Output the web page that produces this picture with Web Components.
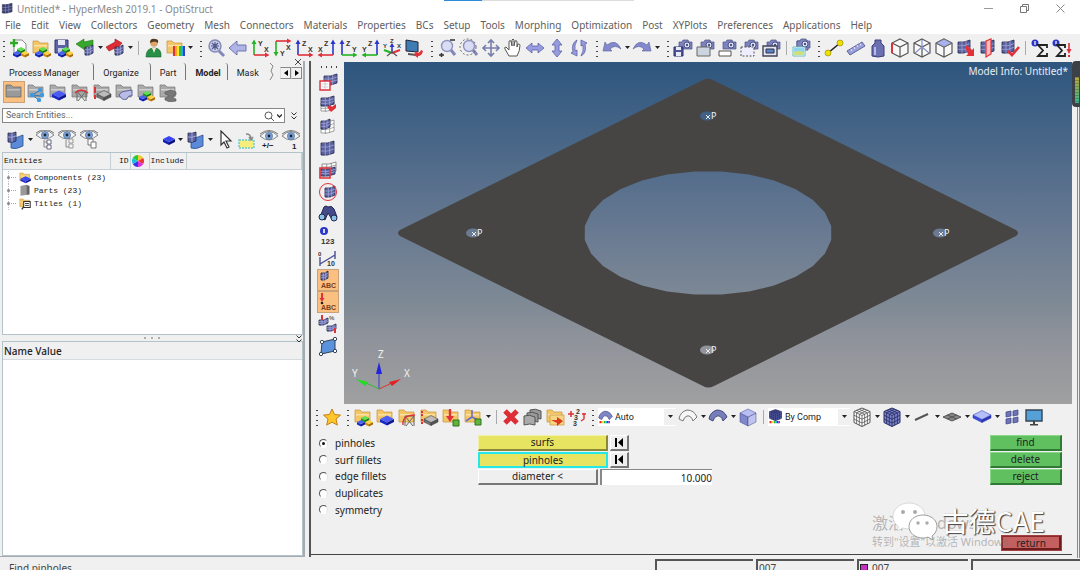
<!DOCTYPE html>
<html lang="en">
<head>
<meta charset="utf-8">
<title>Untitled* - HyperMesh 2019.1 - OptiStruct</title>
<style>
  html, body { margin: 0; height: 100%; overflow: hidden; }
  body { font: 10px/14px "Noto Sans", "Open Sans", sans-serif; color: #222; background: #f0f0f0; }
  hm-app { height: 100%; }
</style>
</head>
<body>
<hm-app></hm-app>

<script>
/* ---------- icon drawing helpers (20 x 20 canvas) ---------- */
const P = (d, fill = 'none', stroke = 'none', w = 1, extra = '') =>
  `<path d="${d}" fill="${fill}" stroke="${stroke}" stroke-width="${w}" ${extra}/>`;
const T = (x, y, s, t, fill = '#333', extra = '') =>
  `<text x="${x}" y="${y}" font-size="${s}" font-weight="700" font-family="Liberation Sans, sans-serif" fill="${fill}" ${extra}>${t}</text>`;
const box = (x, y, w, h, d, top, left, right, line = 'none') =>
  P(`M${x - w} ${y}v${d}l${w} ${h}v${-d}z`, left, line, .5) +
  P(`M${x + w} ${y}v${d}l${-w} ${h}v${-d}z`, right, line, .5) +
  P(`M${x} ${y - h}l${w} ${h}l${-w} ${h}l${-w} ${-h}z`, top, line, .5);
const GREEN = ['#5fe04f', '#1c9a18', '#12750f'], BLUE = ['#4a62f0', '#1a2bc0', '#101c90'],
      YEL = ['#ffd04a', '#d08a10', '#a86c08'], GREY = ['#bbb', '#777', '#555'];
const blocks = (x, y) => box(x, y - 3, 4, 2, 3, ...GREEN) + box(x - 4, y + 1, 4, 2, 2.5, ...BLUE) + box(x + 4, y + 1, 4, 2, 2.5, ...YEL);
const folder = (c = '#f3c766', e = '#c8923a', hi = '#fbe2a4') =>
  P('M2 3h5l2 2h8v10H2z', c, e, .7) + P('M3 7h13v1.500H3z', hi);
const gfolder = folder('#a9a9a9', '#777', '#cfcfcf');
const mesh = (x, y, w = 12, h = 11, c = '#5b62a0', e = '#23264d') => {
  const a = w / 3, b = h / 3;
  return P(`M${x} ${y}q${w / 2} 1 ${w} -2v${h}q${-w / 2} 3 ${-w} 2z`, c, e, .8) +
    P(`M${x} ${y + b}q${w / 2} 1 ${w} -2M${x} ${y + 2 * b}q${w / 2} 1 ${w} -2M${x + a} ${y}v${h + 1}M${x + 2 * a} ${y - 1}v${h + 1}`, 'none', e === '#23264d' ? '#a9aede' : e, .7);
};
const surf = (x, y) => P(`M${x} ${y + 1}q5 2 12 -2v11q-7 4 -12 2z`, '#5b8bd8', '#284a8c', .8) +
  P(`M${x - 3} ${y - 3}q4 1 8 -1v9q-4 2 -8 1z`, '#5b62a0', '#23264d', .8) + P(`M${x - 3} ${y + 1}q4 1 8 -1M${x + 1} ${y - 3}v9`, 'none', '#b5b9e6', .8);
const cam = (x, y) => P(`M${x} ${y + 2}h3l1 -2h5l1 2h3v7h-13z`, '#7d83bc', '#4b5086', .7) +
  `<circle cx="${x + 8}" cy="${y + 5}" r="3" fill="#e4e6f6" stroke="#4b5086"/><circle cx="${x + 8}" cy="${y + 5}" r="1.200" fill="#4b5086"/>`;
const eye = (y = 7) => P(`M1 ${y}q9 -9 18 0q-9 8 -18 0z`, '#f4f4f4', '#777', .9) +
  P(`M1 ${y - 2}q9 -7 18 0`, 'none', '#777', 1) + `<circle cx="10" cy="${y}" r="3.600" fill="#7ba3d8" stroke="#44678f" stroke-width=".6"/><circle cx="10" cy="${y}" r="1.400" fill="#223"/>`;
const lens = '<circle cx="10" cy="8" r="5.500" fill="#d9dcf3" stroke="#8f94bf" stroke-width="1.400"/>' + P('M14 12l4 5', 'none', '#8187b8', 3);
const cubeWire = P('M10 1l8 4v10l-8 4l-8 -4V5z', '#f8f8f8', '#555', 1.2) + P('M2 5l8 4l8 -4M10 9v10', 'none', '#555', 1.2);
const rubik = (f, l) => P('M10 1l8 3.500v11l-8 4l-8 -4v-11z', f, l, 1) +
  P('M2 4.500l8 4l8 -4M10 8.500v11M4.700 3.300l8 4v11M7.400 2.200l8 3.800v11M15.300 3.300l-8 4v11M12.600 2.200l-8 3.600v11M2 8.200l8 4l8 -4M2 12l8 4l8 -4', 'none', l, .8);
const ax = (sx, sy, cv, ch, tv, th, down) => {
  const x0 = sx > 0 ? 4 : 17, x1 = sx > 0 ? 18 : 3, y0 = down ? 3 : 17, y1 = down ? 17 : 3, k = down ? -3 : 3, m = sx > 0 ? -3 : 3;
  return P(`M${x0} ${y0}V${y1}`, 'none', cv, 1.6) + P(`M${x0 - 2.500} ${y1 + k}L${x0} ${y1 - k / 2}L${x0 + 2.500} ${y1 + k}z`, cv) +
    P(`M${x0} ${y0}H${x1}`, 'none', ch, 1.6) + P(`M${x1 + m} ${y0 - 2.500}L${x1 - m / 2} ${y0}L${x1 + m} ${y0 + 2.500}z`, ch) +
    T(sx > 0 ? 8 : 8, down ? 18 : 8, 7, tv) + T(sx > 0 ? 14 : 2, down ? 12 : 14, 7, th);
};
const R = '#e0303a', G = '#22b422', B = '#2b36c8';
const sheet = (f, l) => P('M1 12Q2 5 9 3q7 0 10 7l-4 4Q13 8 9 9q-3 1 -4 5z', f, l, 1);
const rbw = ['#e22', '#f90', '#ee2', '#2b3', '#2ad', '#33d', '#a2c'].map((c, i) => `<rect x="${2 + i * 2}" y="16" width="2" height="3" fill="${c}"/>`).join('');

const ICONS = {
  new: P('M5 2h8l4 4v11H5z', '#fff', '#888') + P('M5 1v8M1 5h8', 'none', '#2faa25', 2.4) + blocks(12, 14),
  open: folder() + blocks(12, 14),
  save: P('M2 2h13v13H2z', '#5d63a5', '#33376c') + P('M5 2h7v5H5z', '#e5e7f5') + P('M5 10h7v5H5z', '#c9cce6') + blocks(13, 14),
  import: P('M1 6l8 -5v3l9 -2v5l-8 2v3z', '#37a82c', '#1e7618', .6) + mesh(10, 9, 8, 8),
  export: P('M17 5l-7 -4v3l-9 5l3 4l6 -3v3z', '#df2c34', '#96151b', .6) + mesh(10, 9, 8, 8),
  user: '<circle cx="11" cy="5" r="3.800" fill="#d9a56a"/>' + P('M7 5q0 -5 5 -4q4 0 3 4q-3 -3 -8 0z', '#52371c') + P('M3 19q0 -9 8 -9t7 9z', '#279046', '#176430', .6) + P('M9 10l2 5l2 -5z', '#f4e6cf'),
  palette: folder() + [R, '#f7a21c', '#f2e92c', '#2fbb3d', '#2aa7dd', '#3340cc'].map((c, i) => `<rect x="${8 + i * 2}" y="8" width="2" height="10" fill="${c}"/>`).join(''),
  fit: '<circle cx="9" cy="8" r="6" fill="#c9cde8" stroke="#8389b4" stroke-width="1.400"/>' + P('M9 4v8M5 8h8M6 5l6 6M12 5l-6 6', 'none', '#555b8c', 1.2) + P('M13 13l5 5', 'none', '#8187b8', 3),
  back: P('M1 10l8 -7v4h9v6H9v4z', '#aeb4e6', '#666ca8', .9),
  axYX: ax(1, 1, G, R, 'Y', 'X'), axYdX: ax(1, 1, G, R, 'Y', 'X', true), axZX: ax(1, 1, B, R, 'Z', 'X'),
  axXZ: ax(-1, 1, B, R, 'Z', 'X'), axZY: ax(1, 1, B, G, 'Z', 'Y'), axYZ: ax(-1, 1, B, G, 'Z', 'Y'),
  triad: P('M10 14V6', 'none', B, 1.6) + P('M7.500 9L10 5l2.500 4z', B) + P('M10 15l-8 -3', 'none', G, 2) + P('M10 15l8 -3', 'none', R, 2) + P('M10 14l-5 4M10 14l5 4', 'none', '#555', 1.2) + T(1, 10, 6, 'Y') + T(15, 10, 6, 'X') + T(8, 5, 6, 'Z'),
  shotred: P('M2 2l12 2v10l-12 -1z', '#3f7cb4', '#223', 1) + P('M4 15l8 1v2l-8 -1z', '#555') + P('M10 17l2 -4l1 2q3 0 4 -3l2 1q-1 5 -5 5l0 2z', R),
  zoomio: lens + P('M13 2h5M2 17h5M4.500 15v4', 'none', '#333', 1.6),
  zoomc: lens + '<circle cx="9" cy="9" r="8" fill="none" stroke="#666" stroke-dasharray="2 2"/>',
  pan: P('M10 2v16M2 10h16M7 5l3 -3l3 3M7 15l3 3l3 -3M5 7l-3 3l3 3M15 7l3 3l-3 3', 'none', '#777dad', 1.6),
  hand: P('M6 18L2 11q-1 -2 1 -2l3 3V4q0 -2 2 -1l1 5V2q1 -2 2 0v6l1 -5q2 -1 2 1v5l1 -3q2 0 2 1q0 6 -3 11z', '#fff', '#555', 1),
  lr: P('M1 10l6 -5v3h6V5l6 5l-6 5v-3H7v3z', '#969ce0', '#5d62a4', .8),
  ud: P('M10 1l5 6h-3v6h3l-5 6l-5 -6h3V7H5z', '#969ce0', '#5d62a4', .8),
  rot: P('M8 2Q2 5 4 14l-2 1l6 3v-6l-2 1Q5 7 8 2zM12 18q6 -3 4 -12l2 -1l-6 -3v6l2 -1q1 6 -2 11z', '#969ce0', '#5d62a4', .8),
  undo: P('M1 13l2 -9l2 3q9 -7 14 4q-6 -5 -11 0l2 2z', '#8289cc', '#5a5f9c', .6),
  redo: P('M19 13l-2 -9l-2 3q-9 -7 -14 4q6 -5 11 0l-2 2z', '#8289cc', '#5a5f9c', .6),
  camSave: cam(6, 2) + P('M1 9h9v9H1z', '#4d5498', '#2c306b') + P('M3 9h5v3H3zM3 14h5v4H3z', '#e8e9f6'),
  camWin: cam(6, 2) + P('M2 9h13v9H2z', '#ccd5df', '#666'), camBar: cam(6, 2) + P('M2 13h12v5H2z', '#fff', '#555'),
  camDash: cam(6, 2) + P('M2 9h13v9H2z', '#eef', '#555', 1, 'stroke-dasharray="2 1.500"'),
  camBox: cam(6, 2) + P('M2 8h14v10H2z', '#dfe3f2', '#445', 1.4) + P('M5 11h8v4H5z', '#5b83c8', '#334'),
  camPics: P('M6 3h11v9H6z', '#a5abda', '#50558e') + cam(6, 1) + P('M2 9h12v9H2z', '#fff', '#6bbcc2') + P('M3 10h10v4H3z', '#8fd4ee') + P('M3 17v-3q5 -2 10 0v3z', '#cfe07a'),
  nodes: P('M4 15l12 -10', 'none', '#222', 1.6) + '<circle cx="4" cy="15" r="3" fill="#efe000" stroke="#8b8200" stroke-width=".6"/><circle cx="16" cy="5" r="3" fill="#efe000" stroke="#8b8200" stroke-width=".6"/>',
  ruler: P('M1 13L16 4l3 4L4 17z', '#9aa1da', '#5c629c') + P('M5 11l1 2M8 9l1 2M11 7l1 2M14 5.500l1 2', 'none', '#e9eaff', 1),
  weight: P('M7 2h6v3l3 3v10q-6 2 -12 0V8l3 -3z', '#6a70b0', '#3a3f78') + P('M7 9v8', 'none', '#b6baf0', 2),
  cubeRed: cubeWire + P('M2 5v10', 'none', R, 2), cubeStar: cubeWire + P('M10 9l-7 6M10 9l7 6M10 9V2', 'none', '#8891c8', 1.2),
  cubeTop: cubeWire + P('M10 1l8 4l-8 4l-8 -4z', '#a9b1ee', '#666', .8),
  meshArrow: mesh(2, 4, 12, 11) + P('M9 9l2 -2l5 5l2 -2v8h-8l2 -2z', R),
  meshPlane: mesh(3, 4, 13, 11) + P('M8 3l5 -2v15l-5 3z', '#fbb', R, 1.2), meshCheck: mesh(2, 4, 12, 11) + P('M8 13l4 4l7 -8', 'none', R, 2.6),
  sigma: `<circle cx="5" cy="5" r="3.500" fill="${B}"/>` + P('M5 3v4', 'none', '#fff', 1.2) + P('M17 10V7H8l5 5.500L8 18h9v-3', 'none', '#222', 1.8),
  sigmaX: `<circle cx="4" cy="5" r="3.500" fill="${B}"/>` + P('M4 3v4', 'none', '#fff', 1.2) + P('M13 10V7H5l5 5.500L5 18h8v-3', 'none', '#222', 1.8) + P('M17 5v8', 'none', R, 1.6) + P('M14.500 11h5l-2.500 5z', R) + P('M16 17h2v2h-2z', R),
  /* model browser */
  fold: folder('#9a9a9a', '#666', '#bdbdbd'),
  foldShare: gfolder + P('M6 13l7 -4M6 13l9 1M6 13l7 5', 'none', '#2f77b8', 1) + [[6, 13], [14, 8], [16, 13], [13, 18]].map(p => `<circle cx="${p[0]}" cy="${p[1]}" r="2.200" fill="#3f9be0"/>`).join(''),
  foldBlue: gfolder + box(11, 12, 7, 3.5, 3, '#4a5cf5', '#1a27c8', '#0f1890'), foldTruss: gfolder + P('M7 19V9h9v10M7 9l8 10M16 9l-8 10', 'none', '#666', 1) + P('M5 11q6 -6 13 0', 'none', R, 1.4),
  foldGrey: gfolder + box(12, 12, 7, 3.5, 3, ...GREY, '#333') + P('M3 5v6M3 13v4', 'none', R, 2), foldTube: gfolder + P('M5 13q2 -4 7 -4l6 -1v6q-4 -1 -5 3q-5 2 -8 -4z', '#b8bce6', '#5c6296'),
  foldBlocks: gfolder + blocks(11, 14), foldI: gfolder + P('M7 10l6 -2l5 2v3l-3 1v2l3 1v2l-6 1l-5 -2v-2l3 -1v-2l-3 -1z', '#777', '#555', .6),
  surf: surf(6, 6), eyeTree: eye(5) + P('M9 10v7h3M9 12h3', 'none', '#888') + P('M12 10h4v4h-4zM12 15h4v4h-4z', '#fff', '#668', 1), eyeTree2: eye(5) + P('M9 10v7h3', 'none', '#888') + P('M12 9h4v4h-4zM12 14h4v4h-4z', '#f4f4f4', '#999'),
  eyePages: eye(5) + P('M9 9h5v6H9z', '#fff', '#777') + P('M12 12h5v6h-5z', '#fff', '#777'), blueBox: box(14, 9, 6, 3, 3, '#3647f0', '#1420b0', '#0c147c'),
  pick: P('M6 1v14l3 -3l3 6l2 -1l-3 -6h5z', '#fff', '#333', 1.2), bucket: P('M2 10h15v8H2z', '#f6ee7c', '#6ac8cc', 1.4, 'stroke-dasharray="2 1"') + P('M9 4q5 0 5 5M12 7l2 3l2 -3', 'none', '#888', 1.4),
  eyePM: eye(6) + T(3, 18, 8, '+/−', '#222'), eyeOne: eye(6) + T(11, 19, 8, '1', '#222'),
  /* display strip */
  mRed: mesh(6, 4, 13, 9) + P('M2 9h10v9H2z', '#fff', R, 1.4) + P('M4 12h6M4 15h6M7 10v7', 'none', '#bbb', .7),
  mMask: mesh(3, 9, 13, 8, '#fff', '#888') + mesh(3, 4, 13, 8) + P('M9 13l3 -2l2 2l4 -3v4l-5 4z', R), mHalf: mesh(3, 6, 13, 11, '#fff', '#888') + mesh(3, 5, 9, 8), mFull: mesh(3, 5, 13, 12),
  mRed2: mesh(4, 4, 14, 9, '#fff', '#777') + mesh(3, 9, 14, 7) + P('M2 8h10v10H2z', 'none', R, 1.6), mCircle: mesh(7, 6, 10, 9) + `<circle cx="10" cy="10" r="8.500" fill="none" stroke="${R}"/>`,
  binoc: P('M2 13L6 3q2 -2 4 0q4 -2 6 2l3 8l-4 4l-5 -8l-3 7z', '#444a8a', '#22264f') + '<circle cx="4" cy="13" r="3" fill="#8cc0e8" stroke="#22264f"/><circle cx="16" cy="14" r="3" fill="#8cc0e8" stroke="#22264f"/>',
  info: `<circle cx="6" cy="5" r="4" fill="${B}"/>` + P('M6 3v4', 'none', '#fff', 1.6) + T(3, 18, 8, '123', '#333'),
  scale: P('M2 18V9M2 16L17 7M17 11V3', 'none', '#4b4f8f', 1.4) + T(0, 8, 6, '0') + T(9, 18, 7, '10'),
  abc: mesh(3, 3, 7, 7) + T(3, 18, 7, 'ABC', '#774020'), abcRed: P('M4 1v7', 'none', R, 2) + P('M1.500 6h5l-2.500 4z', R) + '<circle cx="4" cy="11" r="1.300" fill="#222"/>' + T(3, 18, 7, 'ABC', '#774020'),
  loads: mesh(1, 6, 9, 5) + mesh(9, 12, 9, 5) + P('M4 1v5M17 14v5', 'none', R, 2) + T(11, 6, 6, '%', '#666'),
  quad: P('M4 6l13 -3v12l-14 3z', '#5b92dc', '#345') + [[4, 6], [17, 3], [17, 15], [3, 18]].map(p => `<circle cx="${p[0]}" cy="${p[1]}" r="1.700" fill="#fff" stroke="#345"/>`).join(''),
  /* collectors strip */
  star: P('M10 2l2.500 5.500l6 .6l-4.500 4l1.300 6l-5.300 -3l-5.300 3l1.300 -6l-4.500 -4l6 -.6z', '#ffc62a', '#c47d10'),
  cBlocks: folder() + blocks(12, 14), cBlue: folder() + box(12, 12, 7, 3.5, 3, '#4a5cf5', '#1a27c8', '#0f1890'), cTruss: folder() + P('M8 19V9h9v10M8 9l8 10M17 9l-8 10', 'none', '#666', 1) + P('M6 18q-1 -10 12 -10', 'none', R, 1.4),
  cGrey: folder() + box(12, 12, 7, 3.5, 3, ...GREY, '#333') + P('M3 4v6M3 12v6', 'none', R, 2, 'stroke-dasharray="2 1"'), cLoad: folder() + P('M9 2v8', 'none', R, 2.4) + P('M5 9h8l-4 6z', R) + P('M12 13h6v6h-6z', '#5fb53c', '#33701e'),
  cSys: folder() + P('M9 3v7l-6 4M9 10l6 3', 'none', '#6a70c8', 1.6) + P('M12 12h6v6h-6z', '#5fb53c', '#33701e'), del: P('M4 4l12 12M16 4L4 16', 'none', '#dd2d35', 5),
  cards: P('M7 3q5 -2 11 1v8q-5 -2 -11 0z', '#999', '#555') + P('M4 6q5 -2 11 1v8q-5 -2 -11 0z', '#999', '#555') + P('M1 9q5 -2 11 1v8q-5 -2 -11 0z', '#aaa', '#555'),
  foldArrow: folder() + P('M5 8h14v10H5z', '#f8d583', '#c8923a', .7) + P('M6 13h6v-3l6 4l-6 5v-3z', '#dd3a1c'),
  renum: T(9, 7, 7, '2') + T(7, 13, 7, '3') + T(6, 19, 7, '3') + P('M1 7h6M4 4v6', 'none', R, 1.6) + P('M17 6v6l-3 2M15 7h4', 'none', R, 1.4),
  autoSurf: sheet('#7e86c4', '#494f8c') + rbw, compCube: `<g transform="scale(1 .8)">${rubik('#5058a0', '#262b60')}</g>` + rbw,
  sheetW: sheet('#f6f6f6', '#777'), sheetB: sheet('#767eb8', '#444a80'), cube: box(10, 6, 8, 4, 9, '#b9bff4', '#8087cc', '#bfc4ee', '#3c4280'),
  rubW: rubik('#fff', '#555'), rubB: rubik('#7c83cc', '#262b5c'), line: P('M3 13L16 7', 'none', '#555', 2), plate: P('M1 10l9 -4l9 4l-9 4z', '#888', '#555') + P('M5.500 8l9 4M5.500 12l9 -4', 'none', '#555'),
  slab: box(10, 8, 9, 4.5, 3, '#b4bef8', '#3b4bdc', '#2b37b0', '#2b37b0'), parts: [[4, 5], [11, 4], [4, 12], [11, 11]].map(p => P(`M${p[0]} ${p[1]}l5 -1v5l-5 1z`, '#6d74b8', '#3b4080', .7)).join(''),
  screen: P('M2 3h16v11H2z', '#56a0d8', '#345', 1.4) + P('M9 14h2v3H9zM6 17h8v1.500H6z', '#444')
};

const icon = (n, size = 20) => `<svg width="${size}" height="${size}" viewBox="0 0 20 20" aria-hidden="true">${ICONS[n]}</svg>`;
const tri = '<svg class="tri" width="5" height="3" viewBox="0 0 5 3" aria-hidden="true"><path d="M0 0h5L2.500 3z" fill="#222"/></svg>';
const BASE = `*{box-sizing:border-box} button,input,select{font:inherit;color:inherit;margin:0;padding:0;border:0;background:none;border-radius:0} svg{display:block}`;

function define(name, css, html) {
  customElements.define(name, class extends HTMLElement {
    connectedCallback() {
      if (this.shadowRoot) return;
      const t = document.createElement('template');
      t.innerHTML = `<style>${BASE}${css}</style>${typeof html === 'function' ? html(this) : html}`;
      this.attachShadow({ mode: 'open' }).append(t.content.cloneNode(true));
    }
  });
}

/* A run of tool buttons. In "items", "v" is a drop-down arrow, "|" a divider, a leading "*" marks a pressed tool. */
define('hm-tools', `
  :host{display:flex;align-items:center;flex:none}
  :host([vertical]){flex-direction:column}
  button{width:22px;height:22px;display:grid;place-items:center}
  button.v{width:8px}
  .on{background:#fbbf80;border:1px solid #c9a27c}
  .sep{width:8px;height:14px;background:linear-gradient(#aaa,#aaa) center/1px 100% no-repeat}
  .grip{width:8px;height:18px;background:radial-gradient(circle,#444 1px,transparent 1px) center top/8px 5px repeat-y}
  :host([vertical]) .grip{width:18px;height:8px;background:radial-gradient(circle,#444 1px,transparent 1px) left center/5px 8px repeat-x}
`, el => (el.hasAttribute('grip') ? '<span class="grip"></span>' : '') +
  (el.getAttribute('items') || '').split(' ').filter(Boolean).map(n => {
    if (n === '|') return '<span class="sep"></span>';
    if (n === 'v') return `<button class="v" type="button" aria-haspopup="menu">${tri}</button>`;
    const on = n[0] === '*'; if (on) n = n.slice(1);
    return `<button type="button" class="${on ? 'on' : ''}" aria-pressed="${on}">${icon(n)}</button>`;
  }).join(''));

define('hm-combo', `
  :host{display:flex;align-items:center;background:#fff;height:18px;flex:none;position:relative}
  select{appearance:none;flex:1;min-width:0;height:18px;font:9px/18px Roboto,sans-serif;padding-left:2px}
  .a{width:12px;height:16px;background:#f0f0f0;display:grid;place-items:center;pointer-events:none}
`, el => `${icon(el.getAttribute('icon'), 15)}<select aria-label="${el.getAttribute('label')}"><option>${el.getAttribute('value')}</option></select><span class="a">${tri}</span>`);

define('hm-titlebar', `
  :host{display:flex;align-items:center;height:17px;background:#fff;color:#8a8a8a;position:relative;padding:0 14px 0 1px}
  h1{font:inherit;margin:0 auto 0 3px}
  .ctl{display:flex;gap:24px}
  .ctl button{width:12px;height:14px;display:grid;place-items:center}
  .tab{position:absolute;left:444px;top:0;width:190px;height:1px;background:linear-gradient(90deg,#2f8ad8 38px,#ddd 38px)}
`, `<span class="tab"></span>${`<svg width="13" height="13" viewBox="0 0 20 20" aria-hidden="true">${mesh(2, 4, 15, 13, '#3c4170')}</svg>`}
  <h1>Untitled* - HyperMesh 2019.1 - OptiStruct</h1>
  <div class="ctl">
    <button type="button" aria-label="Minimize"><svg width="9" height="9"><path d="M0 4.500h9" stroke="#999"/></svg></button>
    <button type="button" aria-label="Restore"><svg width="9" height="9" fill="none" stroke="#777"><path d="M.5 2.500h6v6h-6zM2.500 2.500v-2h6v6h-2"/></svg></button>
    <button type="button" aria-label="Close"><svg width="9" height="9"><path d="M.5.500l8 8M8.500.500l-8 8" stroke="#888"/></svg></button>
  </div>`);

define('hm-menubar', `
  :host{display:block;height:17px;background:#fff;color:#5e5e5e}
  nav{display:flex;gap:10px;padding:0 5px;line-height:16px;white-space:nowrap}
  a{color:inherit;text-decoration:none}
`, '<nav>' + 'File,Edit,View,Collectors,Geometry,Mesh,Connectors,Materials,Properties,BCs,Setup,Tools,Morphing,Optimization,Post,XYPlots,Preferences,Applications,Help'
  .split(',').map(m => `<a href="#">${m}</a>`).join('') + '</nav>');

define('hm-browser', `
  :host{display:flex;flex-direction:column;background:#f0f0f0;border-right:2px solid #a5abb0;border-bottom:2px solid #a5abb0;min-height:0}
  .tabs{display:flex;align-items:flex-end;height:19px;padding:0 1px 0 0;font:9px/14px Roboto,sans-serif;position:relative}
  .tabs button{height:17px;border-right:1px solid #777;border-top-right-radius:3px;padding:2px 9px 0;white-space:nowrap;text-align:left}
  .tabs .first{padding-right:14px}.tabs .mid{padding-right:11px}
  .tabs .sel{font-weight:700;padding-right:6px}
  .tabs .last{border:0;padding-right:10px}
  .tabs .nav{margin-left:auto;display:flex;padding-bottom:1px}
  .tabs .nav button{width:11px;height:12px;padding:0;border:1px solid #888;border-left-color:#ddd;border-radius:0;display:grid;place-items:center}
  .tabs .x{position:absolute;right:0;top:-4px;width:10px;height:10px;border:0;padding:0;display:grid;place-items:center}
  .row{display:flex;align-items:center}
  .icons{padding:0 3px;height:24px}
  .find{padding:3px 3px 2px 2px;gap:3px;height:20px;margin-top:1px}
  .find label{flex:1;display:flex;align-items:center;height:15px;border:1px solid #888;background:#fff;padding-right:2px;gap:3px}
  .find input{flex:1;min-width:0;padding-left:3px;font:9px/13px Roboto,sans-serif}
  .find input::placeholder{color:#666;opacity:1}
  .chev{width:12px;display:grid;place-items:center}
  .vis{justify-content:space-between;padding:2px 1px 0 4px;height:27px}
  .tree{flex:none;height:183px;margin:0 0 0 2px;border:1px solid #b4c2ca;background:#fff}
  table{border-collapse:collapse;width:100%;table-layout:fixed;font:8px/13px "Liberation Mono",monospace}
  th{font-weight:400;text-align:left;background:#f0f0f0;height:16px;padding:0 1px;border-right:1px solid #c5d0d6;border-bottom:1px solid #c5d0d6;color:#111}
  th.r{text-align:right}
  td{padding:0 0 0 4px;height:13px;white-space:nowrap}
  tbody:before{content:"";display:block;height:1px}
  td div{display:flex;align-items:center;height:13px;gap:2px}
  .split{height:6px;display:flex;justify-content:center;align-items:center;gap:5px;position:relative}
  .split i{width:2px;height:2px;border-radius:1px;background:#999}
  .split svg{position:absolute;right:1px;top:0}
  .props{flex:1;margin-left:2px;border:1px solid #b4c2ca;background:#fff;min-height:0}
  h2{margin:0;font-size:10px;line-height:18px;font-weight:500;background:#f0f0f0;border-bottom:1px solid #d5dade;height:18px;padding-left:1px}
`, () => {
  const tee = '<svg width="9" height="13"><path d="M1.500 0v13" stroke="#bbb" stroke-dasharray="1 1"/><path d="M2 6.500h7" stroke="#aaa" stroke-dasharray="1 1"/><circle cx="1.500" cy="6.500" r="1.500" fill="#888"/></svg>';
  const row = (ic, t) => `<tr><td colspan="5"><div>${tee}<svg width="14" height="13" viewBox="0 0 20 20" aria-hidden="true">${ic}</svg><span>${t}</span></div></td></tr>`;
  const chev = '<svg width="6" height="8" fill="none" stroke="#333"><path d="M.5.500L3 3L5.500.500M.5 4.500L3 7l2.500-2.500"/></svg>';
  return `
  <div class="tabs" role="tablist">
    <button type="button" role="tab" class="first">Process Manager</button><button type="button" role="tab" class="mid">Organize</button><button type="button" role="tab">Part</button><button type="button" role="tab" class="sel" aria-selected="true">Model</button><button type="button" role="tab" class="last">Mask</button>
    <svg width="6" height="17" aria-hidden="true"><path d="M1 0l3 3l-2 5l2 4l-3 5" fill="none" stroke="#888"/></svg>
    <span class="nav"><button type="button" aria-label="Previous tabs"><svg width="4" height="6"><path d="M4 0v6L0 3z"/></svg></button><button type="button" aria-label="Next tabs"><svg width="4" height="6"><path d="M0 0v6l4-3z"/></svg></button></span>
    <button class="x" type="button" aria-label="Close browser"><svg width="6" height="6"><path d="M0 0l6 6M6 0L0 6" stroke="#444"/></svg></button>
  </div>
  <div class="row icons"><hm-tools items="*fold foldShare foldBlue foldTruss foldGrey foldTube foldBlocks foldI"></hm-tools></div>
  <div class="row find"><label><input type="text" aria-label="Search entities" placeholder="Search Entities...">
    <svg width="10" height="10" fill="none" stroke="#555"><circle cx="4.500" cy="4.500" r="3.500"/><path d="M7 7l3 3"/></svg><svg width="5" height="4" fill="none" stroke="#333"><path d="M0 .5L2.500 3L5 .5" stroke-width="1.400"/></svg></label>
    <button class="chev" type="button" aria-label="More">${chev}</button></div>
  <div class="row vis"><hm-tools items="surf v eyeTree eyeTree2 eyePages"></hm-tools><hm-tools items="blueBox v surf v pick bucket eyePM eyeOne"></hm-tools></div>
  <div class="tree"><table>
    <colgroup><col style="width:107px"><col style="width:20px"><col style="width:19px"><col style="width:37px"><col></colgroup>
    <thead><tr><th>Entities</th><th class="r">ID</th><th><svg width="12" height="12" viewBox="-6 -6 12 12" aria-label="Color">
      <path d="M0 0V-6A6 6 0 0 1 5.200-3z" fill="#ec3"/><path d="M0 0L5.200-3A6 6 0 0 1 5.200 3z" fill="#e33"/><path d="M0 0L5.200 3A6 6 0 0 1 0 6z" fill="#d3d"/><path d="M0 0V6A6 6 0 0 1-5.200 3z" fill="#33e"/><path d="M0 0L-5.200 3A6 6 0 0 1-5.200-3z" fill="#2bd"/><path d="M0 0L-5.200-3A6 6 0 0 1 0-6z" fill="#2c3"/></svg></th><th>Include</th><th></th></tr></thead>
    <tbody>${row(folder() + box(11, 12, 8, 4, 3, '#3a4cf0', '#1a27c8', '#0f1890'), 'Components (23)')}${row(P('M3 3l9 -2v16l-9 1z', '#999') + P('M12 1l5 2v13l-5 1z', '#666'), 'Parts (23)')}${row(folder() + P('M8 7h10v9H8z', '#fff', '#333', 1.6) + P('M10 10h6M10 13h6', 'none', '#333', 1.4) + P('M5 19l3 -4', 'none', '#333', 2), 'Titles (1)')}</tbody>
  </table></div>
  <div class="split"><i></i><i></i><i></i>${chev.replace('height="8"', 'height="8" aria-hidden="true"')}</div>
  <div class="props"><h2>Name Value</h2></div>`;
});

define('hm-viewport', `
  :host{display:block;position:relative;background:linear-gradient(#2e567e,#4d6989 27%,#697a92 50%,#7f8a95 71%,#8e929a 80%,#a0a0a0);min-width:0;overflow:hidden}
  svg{width:100%;height:100%}
  text{font:10px "Noto Sans",sans-serif;fill:#f2f2f2}
  p{position:absolute;right:4px;top:2px;margin:0;color:#e8eef4}
`, () => {
  const hole = Array.from({ length: 28 }, (_, i) => {
    const a = (i + .5) * Math.PI / 14;
    return `${i ? 'L' : 'M'}${(364 + 124 * Math.cos(a)).toFixed(1)} ${(171 + 62 * Math.sin(a)).toFixed(1)}`;
  }).join('') + 'z';
  const pins = [[364, 54], [130, 171], [597, 171], [364, 288]];
  const dot = ([x, y]) => `M${x - 8} ${y}a7 4.500 0 1 0 14 0a7 4.500 0 1 0 -14 0z`;
  return `<svg viewBox="0 0 728 342" role="img" aria-label="Plate model">
    <path fill-rule="evenodd" fill="#474543" d="M359 18q5 -3 10 0L672 168q4 3 0 6L370 324q-6 3 -11 0L56 174q-4 -3 0 -6z${hole}${pins.map(dot).join('')}"/>
    ${pins.map(([x, y]) => `<path d="M${x - 2} ${y - 1}l4 4M${x + 2} ${y - 1}l-4 4" stroke="#eee"/><text x="${x + 3}" y="${y + 3}" style="font-size:9px">P</text>`).join('')}
    <path d="M35 327V310" stroke="#3a3ad0"/><path d="M35 300l3 12h-6z" fill="#2222e0"/>
    <path d="M35 327L50 320" stroke="#d33"/><path d="M57 317l-12 3l3 4z" fill="#e22222"/>
    <path d="M35 327L20 320" stroke="#3b3"/><path d="M12 317l12 3l-3 4z" fill="#22dd22"/>
    <text x="34" y="296">Z</text><text x="60" y="315">X</text><text x="8" y="315">Y</text>
  </svg><p>Model Info: Untitled*</p>`;
});

define('hm-radio', `
  :host{display:block}
  label{display:flex;align-items:center;gap:7px;height:100%}
  input{appearance:none;width:9px;height:9px;border-radius:50%;background:#fff;border:1px solid;border-color:#555 #e4e4e4 #fff #555;display:grid;place-items:center}
  input:checked:after{content:"";width:3px;height:3px;border-radius:50%;background:#111}
`, el => `<label><input type="radio" name="op" ${el.hasAttribute('checked') ? 'checked' : ''}><slot></slot></label>`);

define('hm-button', `
  :host{display:block;height:16px}
  button{display:block;width:100%;height:100%;text-align:center;background:var(--face,#efefef);border:1px solid;border-color:var(--hi,#fff) var(--lo,#777) var(--lo,#777) var(--hi,#fff);border-bottom-width:2px;border-right-width:2px;line-height:13px}
  :host([focused]) button{border:2px solid #22e8e8;line-height:12px}
  ::slotted(svg){margin:auto}
`, '<button type="button"><slot></slot></button>');

define('hm-panel', `
  :host{display:grid;grid-template-columns:159px minmax(0,1fr) 72px;padding:0 10px 0 8px;border-bottom:1px solid #444;position:relative}
  .ops{display:grid;grid-template-rows:repeat(5,1fr);height:83px}
  .form{display:grid;gap:1px;align-content:start}
  .line{display:flex;gap:2px}
  .line hm-button.w{width:130px;--face:#e6e460;--hi:#f2f0a8;--lo:#8a8838}
  .line hm-button.n{width:120px}
  .line hm-button.k{width:19px}
  .line input{width:112px;height:16px;background:#fff;border:1px solid #888;border-left-width:2px;border-right:0;border-bottom:0;text-align:right}
  .acts{display:flex;flex-direction:column;gap:1px}
  .acts hm-button{--face:#60c060;--hi:#8ad88a;--lo:#2f7a35}
  .acts .ret{--face:#c46060;--hi:#8c2a2a;--lo:#6e1c1c;margin:auto 0 3px auto;width:61px;border:1px solid #a04040}
  .wm{position:absolute;right:34px;bottom:4px;color:rgba(120,120,120,.5);font-family:"Noto Sans","Noto Sans CJK SC",sans-serif;width:166px;pointer-events:none;white-space:nowrap}
  .wm p{margin:0;font-size:11px;line-height:16px}.wm p:first-child{font-size:16px;line-height:22px}
  .logo{position:absolute;right:27px;bottom:14px;display:flex;align-items:center;gap:3px;font:27px/38px "Noto Sans CJK SC",sans-serif;color:#fff;text-shadow:1px 1px 1px #444,1px 0 1px #666;pointer-events:none}
`, `
  <div class="ops" role="radiogroup" aria-label="Defeature"><hm-radio checked>pinholes</hm-radio><hm-radio>surf fillets</hm-radio><hm-radio>edge fillets</hm-radio><hm-radio>duplicates</hm-radio><hm-radio>symmetry</hm-radio></div>
  <div class="form">
    ${[['surfs', ''], ['pinholes', 'focused']].map(([t, f]) => `<div class="line"><hm-button class="w" ${f}>${t}</hm-button><hm-button class="k"><svg width="9" height="9" aria-label="reset"><path d="M0 0h2v9H0zM8 0v9L3 4.500z"/></svg></hm-button></div>`).join('')}
    <div class="line"><hm-button class="n">diameter &lt;</hm-button><input type="text" aria-label="diameter" value="10.000"></div>
  </div>
  <div class="acts"><hm-button>find</hm-button><hm-button>delete</hm-button><hm-button>reject</hm-button><hm-button class="ret">return</hm-button></div>
  <div class="wm"><p>激活 Windows</p><p>转到"设置"以激活 Windows。</p></div>
  <div class="logo"><svg width="46" height="38" viewBox="0 0 46 38" aria-hidden="true">
    <path d="M17 1C8 1 1 7 1 14.500c0 4 2 7.500 5.500 10L5 29l6-3q3 1 6 1c9 0 16-6 16-13S26 1 17 1z" fill="#fff" stroke="#ccc" stroke-width=".7"/>
    <path d="M31 13c-8 0-14 5-14 11.500S23 36 31 36q3 0 5-1l5 3l-1-4c3-2 5-5.500 5-9.500C45 18 39 13 31 13z" fill="#fff" stroke="#888" stroke-width=".8"/>
    <g fill="#aaa"><circle cx="11" cy="10" r="2"/><circle cx="23" cy="10" r="2"/><circle cx="26" cy="21" r="1.700"/><circle cx="35" cy="21" r="1.700"/></g></svg><span>古德CAE</span></div>`);

define('hm-status', `
  :host{display:grid;grid-template-columns:minmax(0,1fr) 98px 98px 111px 109px;gap:3px;height:13px;padding-top:2px;overflow:hidden;background:#f0f0f0;color:#444}
  span{display:flex;align-items:flex-start;gap:4px;height:20px;line-height:14px;border:solid #555;border-width:2px 0 0 2px;padding:0 1px}
  .msg{border-color:transparent;padding-left:7px}
  i{width:8px;height:8px;background:#c530c5;border:1px solid #222;margin-top:3px}
`, '<span class="msg">Find pinholes</span><span></span><span>007</span><span><i></i>007</span><span></span>');

define('hm-app', `
  :host{display:flex;flex-direction:column;background:#f0f0f0}
  .bar{display:flex;align-items:center;gap:3px;height:27px;flex:none}
  main{flex:1;min-height:0;display:grid;grid-template-columns:305px minmax(0,1fr) 8px}
  .work{display:flex;flex-direction:column;margin-left:4px;border-left:2px solid #555;min-width:0}
  .view{flex:1;display:flex;min-height:0}
  .view hm-tools{width:33px;padding-top:2px}
  .view hm-viewport{flex:1;margin-top:1px}
  .bar2{height:31px;padding:0 0 6px 2px;gap:1px}
  hm-panel{flex:none;height:120px;margin-bottom:3px}
  .edge{border-right:3px double #888;position:relative}
  .edge i{position:absolute;left:0;right:-3px;top:0;height:46px;border-radius:4px 0 0 4px;background:#3c4048;padding:16px 1px 4px 3px}
  .edge i:before{content:"";display:block;height:26px;background:repeating-linear-gradient(#0003 0 1px,transparent 1px 3px),linear-gradient(#b5a63c,#39b58a)}
`, `
  <hm-titlebar></hm-titlebar>
  <hm-menubar></hm-menubar>
  <div class="bar">
    <hm-tools grip items="new open save import v export v | user palette v"></hm-tools>
    <hm-tools grip items="fit back axYX axYdX axZX axXZ axZY axYZ triad shotred"></hm-tools>
    <hm-tools grip items="zoomio zoomc pan hand lr ud rot"></hm-tools>
    <hm-tools grip items="undo v redo v"></hm-tools>
    <hm-tools grip items="camSave camWin camBar camDash camBox | camPics"></hm-tools>
    <hm-tools grip items="nodes ruler weight cubeRed cubeStar cubeTop meshArrow meshPlane meshCheck | sigma sigmaX"></hm-tools>
  </div>
  <main>
    <hm-browser></hm-browser>
    <div class="work">
      <div class="view"><hm-tools vertical grip items="mRed mMask mHalf mFull mRed2 mCircle binoc info scale *abc *abcRed loads quad"></hm-tools><hm-viewport></hm-viewport></div>
      <div class="bar bar2">
        <hm-tools grip items="star"></hm-tools>
        <hm-tools grip items="cBlocks cBlue cTruss cGrey cLoad cSys v | del cards foldArrow renum"></hm-tools>
        <hm-tools grip></hm-tools><hm-combo style="width:78px" icon="autoSurf" label="Element color mode" value="Auto"></hm-combo>
        <hm-tools items="sheetW v sheetB v cube |"></hm-tools><hm-combo style="width:82px" icon="compCube" label="Geometry color mode" value="By Comp"></hm-combo>
        <hm-tools items="rubW v rubB v line v plate v slab v parts screen"></hm-tools>
      </div>
      <hm-panel></hm-panel>
    </div>
    <div class="edge"><i></i></div>
  </main>
  <hm-status></hm-status>`);
</script>
</body>
</html>
